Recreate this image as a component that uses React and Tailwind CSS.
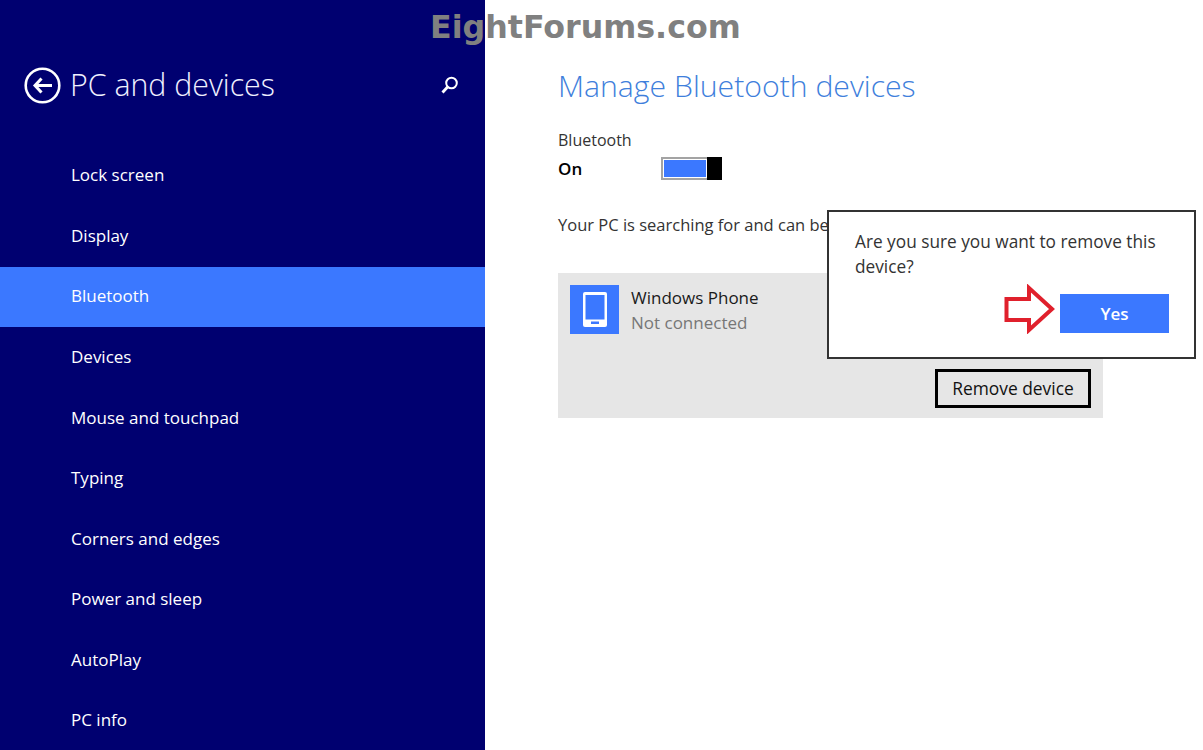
import { useState } from 'react';

const menu = ['Lock screen', 'Display', 'Bluetooth', 'Devices', 'Mouse and touchpad', 'Typing', 'Corners and edges', 'Power and sleep', 'AutoPlay', 'PC info'];

function Sidebar() {
  return (
    <aside className="w-[485px] shrink-0 bg-[#000070] text-white h-full overflow-hidden">
      <div className="h-[145.6px] pl-[24px] pr-[24px] pt-[67px] flex items-start">
        <svg width="37" height="37" viewBox="0 0 37 37" fill="none" stroke="white" className="shrink-0">
          <circle cx="18.5" cy="18.5" r="16.8" strokeWidth="2.6" />
          <path d="M11 18.5H28" strokeWidth="3" />
          <path d="M17.5 11.5L11 18.5L17.5 25.5" strokeWidth="3" />
        </svg>
        <h1 className="ml-[9px] -mt-[1px] text-[30.3px] leading-[37px] font-light text-[#f0f0ff]">PC and devices</h1>
        <svg width="20" height="20" viewBox="0 0 20 20" fill="none" stroke="white" className="ml-auto mt-[8px] mr-[1px]">
          <circle cx="11.5" cy="8" r="5.3" strokeWidth="2" />
          <path d="M8 11.5L2.5 17.5" strokeWidth="2.8" />
        </svg>
      </div>
      <nav className="flex flex-col">
        {menu.map((item) => (
          <div key={item} className={`h-[60.6px] pl-[71px] pb-[2px] flex items-center text-[17px] ${item === 'Bluetooth' ? 'bg-[#3b78ff]' : ''}`}>
            {item}
          </div>
        ))}
      </nav>
    </aside>
  );
}

function PhoneIcon() {
  return (
    <div className="w-[49px] h-[49px] bg-[#3b78ff] flex items-center justify-center">
      <svg width="24" height="35" viewBox="0 0 24 35">
        <rect x="0" y="0" width="24" height="35" rx="2" fill="white" />
        <rect x="2.5" y="3" width="19" height="24.5" fill="#3b78ff" />
        <rect x="8" y="29.5" width="8" height="2.5" fill="#3b78ff" />
      </svg>
    </div>
  );
}

export default function App() {
  const [on] = useState(true);

  return (
    <div className="relative w-[1203px] h-[750px] overflow-hidden bg-white flex font-['Open_Sans','Noto_Sans',sans-serif]">
      <Sidebar />
      <main className="flex-1 pl-[73px] pt-[66px]">
        <h2 className="text-[30.2px] leading-[40px] font-light text-[#3f7fdc]">Manage Bluetooth devices</h2>
        <p className="mt-[22px] text-[16px] leading-[24px] text-[#333]">Bluetooth</p>
        <div className="mt-[5px] flex items-center h-[24px]">
          <span className="w-[103px] text-[17px] font-semibold text-black">{on ? 'On' : 'Off'}</span>
          <div className="w-[61px] h-[23px] mb-[2px] border-[2px] border-[#a3a3a3] flex">
            <div className="flex-1 m-[1px] bg-[#3b78ff]" />
            <div className="w-[15px] h-[23px] -mt-[2px] -mr-[2px] bg-black" />
          </div>
        </div>
        <p className="mt-[32px] text-[16.5px] leading-[24px] text-[#333] whitespace-nowrap">Your PC is searching for and can be</p>
        <div className="mt-[36px] w-[545px] h-[145px] bg-[#e6e6e6] px-[12px] pt-[12px] flex flex-col">
          <div className="flex gap-[12px]">
            <PhoneIcon />
            <div className="text-[17px] leading-[25px]">
              <p className="text-[#1a1a1a]">Windows Phone</p>
              <p className="text-[#777]">Not connected</p>
            </div>
          </div>
          <button className="self-end mt-[34px] w-[156px] h-[39px] border-[3px] border-black text-[17.4px] font-medium text-[#111]">Remove device</button>
        </div>
      </main>

      <div className="absolute left-[827px] top-[210px] w-[369px] h-[149px] bg-white border-[2px] border-[#333] pl-[26px] pr-[20px] pt-[17px]">
        <p className="text-[17.25px] leading-[25px] text-[#333]">Are you sure you want to remove this device?</p>
        <div className="mt-[15px] flex justify-end items-start mr-[5px] gap-[5px]">
          <svg width="52" height="50" viewBox="0 0 52 50" fill="none" className="-mt-[10px]">
            <path d="M3.5 15H26V4L49 25L26 46V36H3.5Z" stroke="#e0202c" strokeWidth="4" strokeLinejoin="miter" />
          </svg>
          <button className="w-[109px] h-[39px] bg-[#3b78ff] text-white text-[17px] font-semibold">Yes</button>
        </div>
      </div>

      <div className="absolute left-[430px] top-[7px] text-[31.7px] leading-[40px] font-bold text-[#808080] font-['DejaVu_Sans',sans-serif]">EightForums.com</div>
    </div>
  );
}
